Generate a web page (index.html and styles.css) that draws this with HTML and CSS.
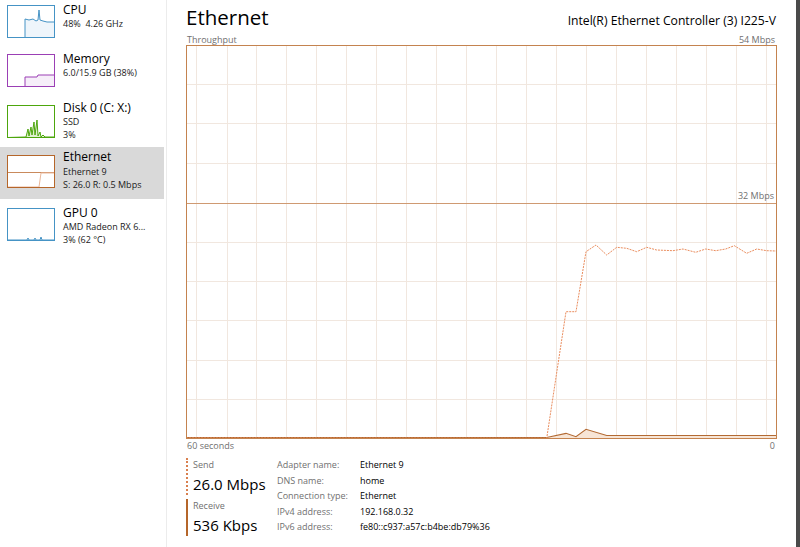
FILE: index.html
```html
<!doctype html>
<html>
<head>
    <title>Task Manager - Ethernet</title>
    <meta charset="utf-8">
    <link rel="stylesheet" href="styles.css">
</head><body>
<div class="app">
    <nav class="sidebar">
        <div class="item">
            <svg class="thumb" viewBox="0 0 48 33">
                <path d="M18,33 L18,14 L22,15 L26,14 L29,16 L31,15 L32,5 L33,15 L36,16 L40,17 L47.5,17 L47.5,33 Z" fill="#eef5fb" stroke="#4593c5" stroke-width="1"/>
                <rect x="0.5" y="0.5" width="47" height="32" fill="none" stroke="#4593c5"/>
            </svg>
            <div class="info">
                <div class="name">CPU</div>
                <div class="sub">48%&nbsp; 4.26 GHz</div>
            </div>
        </div>
        <div class="item">
            <svg class="thumb" viewBox="0 0 48 33">
                <path d="M18,33 L18,23 L30,23 L31,21 L47.5,21 L47.5,33 Z" fill="#f6eef9" stroke="#9b3fb5" stroke-width="1"/>
                <rect x="0.5" y="0.5" width="47" height="32" fill="none" stroke="#9b3fb5"/>
            </svg>
            <div class="info">
                <div class="name">Memory</div>
                <div class="sub">6.0/15.9 GB (38%)</div>
            </div>
        </div>
        <div class="item tall">
            <svg class="thumb" viewBox="0 0 48 33">
                <path d="M0,32.5 L19,32 L21,24 L22,31 L24,22 L25,30 L27,17 L28,30 L30,15 L31,31 L33,27 L34,32 L36,30 L38,32 L47.5,32 L47.5,33 L0,33 Z" fill="#dff0cf" stroke="#4da60c" stroke-width="1"/>
                <rect x="0.5" y="0.5" width="47" height="32" fill="none" stroke="#4da60c"/>
            </svg>
            <div class="info">
                <div class="name">Disk 0 (C: X:)</div>
                <div class="sub">SSD</div>
                <div class="sub">3%</div>
            </div>
        </div>
        <div class="item tall active">
            <svg class="thumb" viewBox="0 0 48 33">
                <rect x="0" y="0" width="48" height="33" fill="#fff"/>
                <line x1="0" y1="17.5" x2="48" y2="17.5" stroke="#c98a5c" stroke-width="1"/>
                <path d="M1,32 L32,32 L34,18 L47,18" fill="none" stroke="#eab79a" stroke-width="1"/>
                <rect x="0.5" y="0.5" width="47" height="32" fill="none" stroke="#b5662a"/>
            </svg>
            <div class="info">
                <div class="name">Ethernet</div>
                <div class="sub">Ethernet 9</div>
                <div class="sub">S: 26.0 R: 0.5 Mbps</div>
            </div>
        </div>
        <div class="item tall last">
            <svg class="thumb" viewBox="0 0 48 33">
                <path d="M0,32 L20,32 L21,30 L22,32 L27,32 L28,30 L29,32 L33,32 L34,29 L35,32 L48,32" fill="none" stroke="#4593c5" stroke-width="1"/>
                <rect x="0.5" y="0.5" width="47" height="32" fill="none" stroke="#4593c5"/>
            </svg>
            <div class="info">
                <div class="name">GPU 0</div>
                <div class="sub">AMD Radeon RX 6...</div>
                <div class="sub">3% (62 °C)</div>
            </div>
        </div>
    </nav>
    <div class="divider"></div>
    <main class="panel">
        <header class="head">
            <h1>Ethernet</h1>
            <div class="model">Intel(R) Ethernet Controller (3) I225-V</div>
        </header>
        <div class="axis top"><span>Throughput</span><span>54 Mbps</span></div>
        <div class="chart">
            <svg width="591" height="394" viewBox="0 0 591 394">
                <g stroke="#f1e7df" stroke-width="1">
                    <line x1="10.5" y1="0" x2="10.5" y2="394"/>
                    <line x1="41.5" y1="0" x2="41.5" y2="394"/>
                    <line x1="70.5" y1="0" x2="70.5" y2="394"/>
                    <line x1="100.5" y1="0" x2="100.5" y2="394"/>
                    <line x1="130.5" y1="0" x2="130.5" y2="394"/>
                    <line x1="160.5" y1="0" x2="160.5" y2="394"/>
                    <line x1="190.5" y1="0" x2="190.5" y2="394"/>
                    <line x1="220.5" y1="0" x2="220.5" y2="394"/>
                    <line x1="250.5" y1="0" x2="250.5" y2="394"/>
                    <line x1="280.5" y1="0" x2="280.5" y2="394"/>
                    <line x1="310.5" y1="0" x2="310.5" y2="394"/>
                    <line x1="340.5" y1="0" x2="340.5" y2="394"/>
                    <line x1="370.5" y1="0" x2="370.5" y2="394"/>
                    <line x1="400.5" y1="0" x2="400.5" y2="394"/>
                    <line x1="430.5" y1="0" x2="430.5" y2="394"/>
                    <line x1="460.5" y1="0" x2="460.5" y2="394"/>
                    <line x1="490.5" y1="0" x2="490.5" y2="394"/>
                    <line x1="520.5" y1="0" x2="520.5" y2="394"/>
                    <line x1="550.5" y1="0" x2="550.5" y2="394"/>
                    <line x1="580.5" y1="0" x2="580.5" y2="394"/>
                    <line x1="0" y1="39.5" x2="591" y2="39.5"/>
                    <line x1="0" y1="78.5" x2="591" y2="78.5"/>
                    <line x1="0" y1="118.5" x2="591" y2="118.5"/>
                    <line x1="0" y1="197.5" x2="591" y2="197.5"/>
                    <line x1="0" y1="236.5" x2="591" y2="236.5"/>
                    <line x1="0" y1="275.5" x2="591" y2="275.5"/>
                    <line x1="0" y1="315.5" x2="591" y2="315.5"/>
                    <line x1="0" y1="354.5" x2="591" y2="354.5"/>
                </g>
                <line x1="0" y1="158.5" x2="591" y2="158.5" stroke="#cf9a72" stroke-width="1"/>
                <!-- receive -->
                <path d="M0,393 L360.7,393 L380,388.3 L390,391.7 L400,384.3 L420.7,390.5 L590,390.5 L590,393 Z" fill="#f7e5d6" stroke="none"/>
                <path d="M0,392.5 L360.7,392.5 L380,388.3 L390,391.7 L400,384.3 L420.7,390.5 L590,390.5" fill="none" stroke="#b36a33" stroke-width="1.2"/>
                <!-- send -->
                <path d="M0,393 L360.7,393.3 L380,266.7 L390,266.7 L400,206.7 L410,200 L420.7,210 L430.7,202.3 L440.7,203.3 L450.7,206.7 L460.7,202.3 L470.7,205 L487,205.7 L497,204 L509.7,207.3 L519.7,204 L529.7,205.7 L539.7,204 L548.3,200.7 L560.7,208.3 L570.7,204 L580.7,205.7 L590,206" fill="none" stroke="#ea8d5e" stroke-width="1" stroke-dasharray="2 1"/>
                <rect x="0.5" y="0.5" width="590" height="393" fill="none" stroke="#c4834f" stroke-width="1"/>
            </svg>
            <span class="mark">32 Mbps</span>
        </div>
        <div class="axis bottom"><span>60 seconds</span><span>0</span></div>
        <section class="stats">
            <div class="legend">
                <div class="rate send">
                    <div class="label">Send</div>
                    <div class="value">26.0 Mbps</div>
                </div>
                <div class="rate receive">
                    <div class="label">Receive</div>
                    <div class="value">536 Kbps</div>
                </div>
            </div>
            <dl class="details">
                <dt>Adapter name:</dt><dd>Ethernet 9</dd>
                <dt>DNS name:</dt><dd>home</dd>
                <dt>Connection type:</dt><dd>Ethernet</dd>
                <dt>IPv4 address:</dt><dd>192.168.0.32</dd>
                <dt>IPv6 address:</dt><dd>fe80::c937:a57c:b4be:db79%36</dd>
            </dl>
        </section>
    </main>
    <div class="scrollbar"></div>
</div>
</body></html>
```

FILE: styles.css
```css
html, body {
    margin: 0;
    padding: 0;
    background: #fff;
    overflow: hidden;
}

body {
    font: 12px 'Open Sans', 'Noto Sans', sans-serif;
    color: #000;
}

.app {
    display: flex;
    width: 800px;
    height: 547px;
}

.sidebar {
    width: 164px;
    flex: none;
}

.item {
    display: flex;
    height: 49px;
    box-sizing: border-box;
    padding-top: 2px;
}

.item.active {
    height: 52px;
    background: #d9d9d9;
}

.item.last {
    height: 56px;
    padding-top: 6px;
}

.thumb {
    width: 48px;
    height: 33px;
    flex: none;
    margin: 3px 8px 0 7px;
}

.item.tall .thumb {
    margin-top: 5px;
}

.item.active .thumb {
    margin-top: 6px;
}

.item.last .thumb {
    margin-top: 3px;
}

.name {
    font-size: 12px;
    line-height: 16.4px;
}

.sub {
    font-size: 9px;
    line-height: 12.4px;
    color: #1a1a1a;
}

.item.active .sub {
    line-height: 13px;
}

.divider {
    width: 1px;
    margin-left: 2px;
    background: #ececec;
    flex: none;
}

.panel {
    flex: 1;
    padding-left: 19px;
    padding-right: 19px;
}

.head {
    display: flex;
    justify-content: space-between;
    align-items: baseline;
    height: 35px;
    box-sizing: border-box;
    padding-top: 3px;
}

h1 {
    margin: 0;
    font-size: 20.5px;
    font-weight: 400;
    line-height: 28px;
}

.model {
    font-size: 12.2px;
    padding-right: 1px;
}

.axis {
    display: flex;
    justify-content: space-between;
    font-size: 9px;
    color: #707070;
    padding: 0 2px 0 1px;
}

.axis.top {
    line-height: 10px;
}

.axis.bottom {
    line-height: 13px;
}

.chart {
    position: relative;
    height: 394px;
}

.chart svg {
    display: block;
}

.mark {
    position: absolute;
    right: 3px;
    top: 146px;
    font-size: 9px;
    line-height: 10px;
    color: #707070;
}

.stats {
    display: flex;
    margin-top: 6px;
}

.legend {
    width: 91px;
    flex: none;
}

.rate {
    border-left: 2px solid #b5662a;
    padding-left: 5px;
}

.rate.send {
    border-left: 2px dotted #d9804f;
    margin-bottom: 4.5px;
}

.label {
    font-size: 9px;
    line-height: 14.5px;
    color: #707070;
}

.value {
    font-size: 15px;
    line-height: 22px;
}

.details {
    display: grid;
    grid-template-columns: 83px auto;
    margin: 0;
    font-size: 9px;
    line-height: 14.5px;
}

.details dt {
    color: #707070;
}

.details dd {
    margin: 0;
}

.scrollbar {
    width: 4px;
    flex: none;
    background: #4a4a4a;
}
```
